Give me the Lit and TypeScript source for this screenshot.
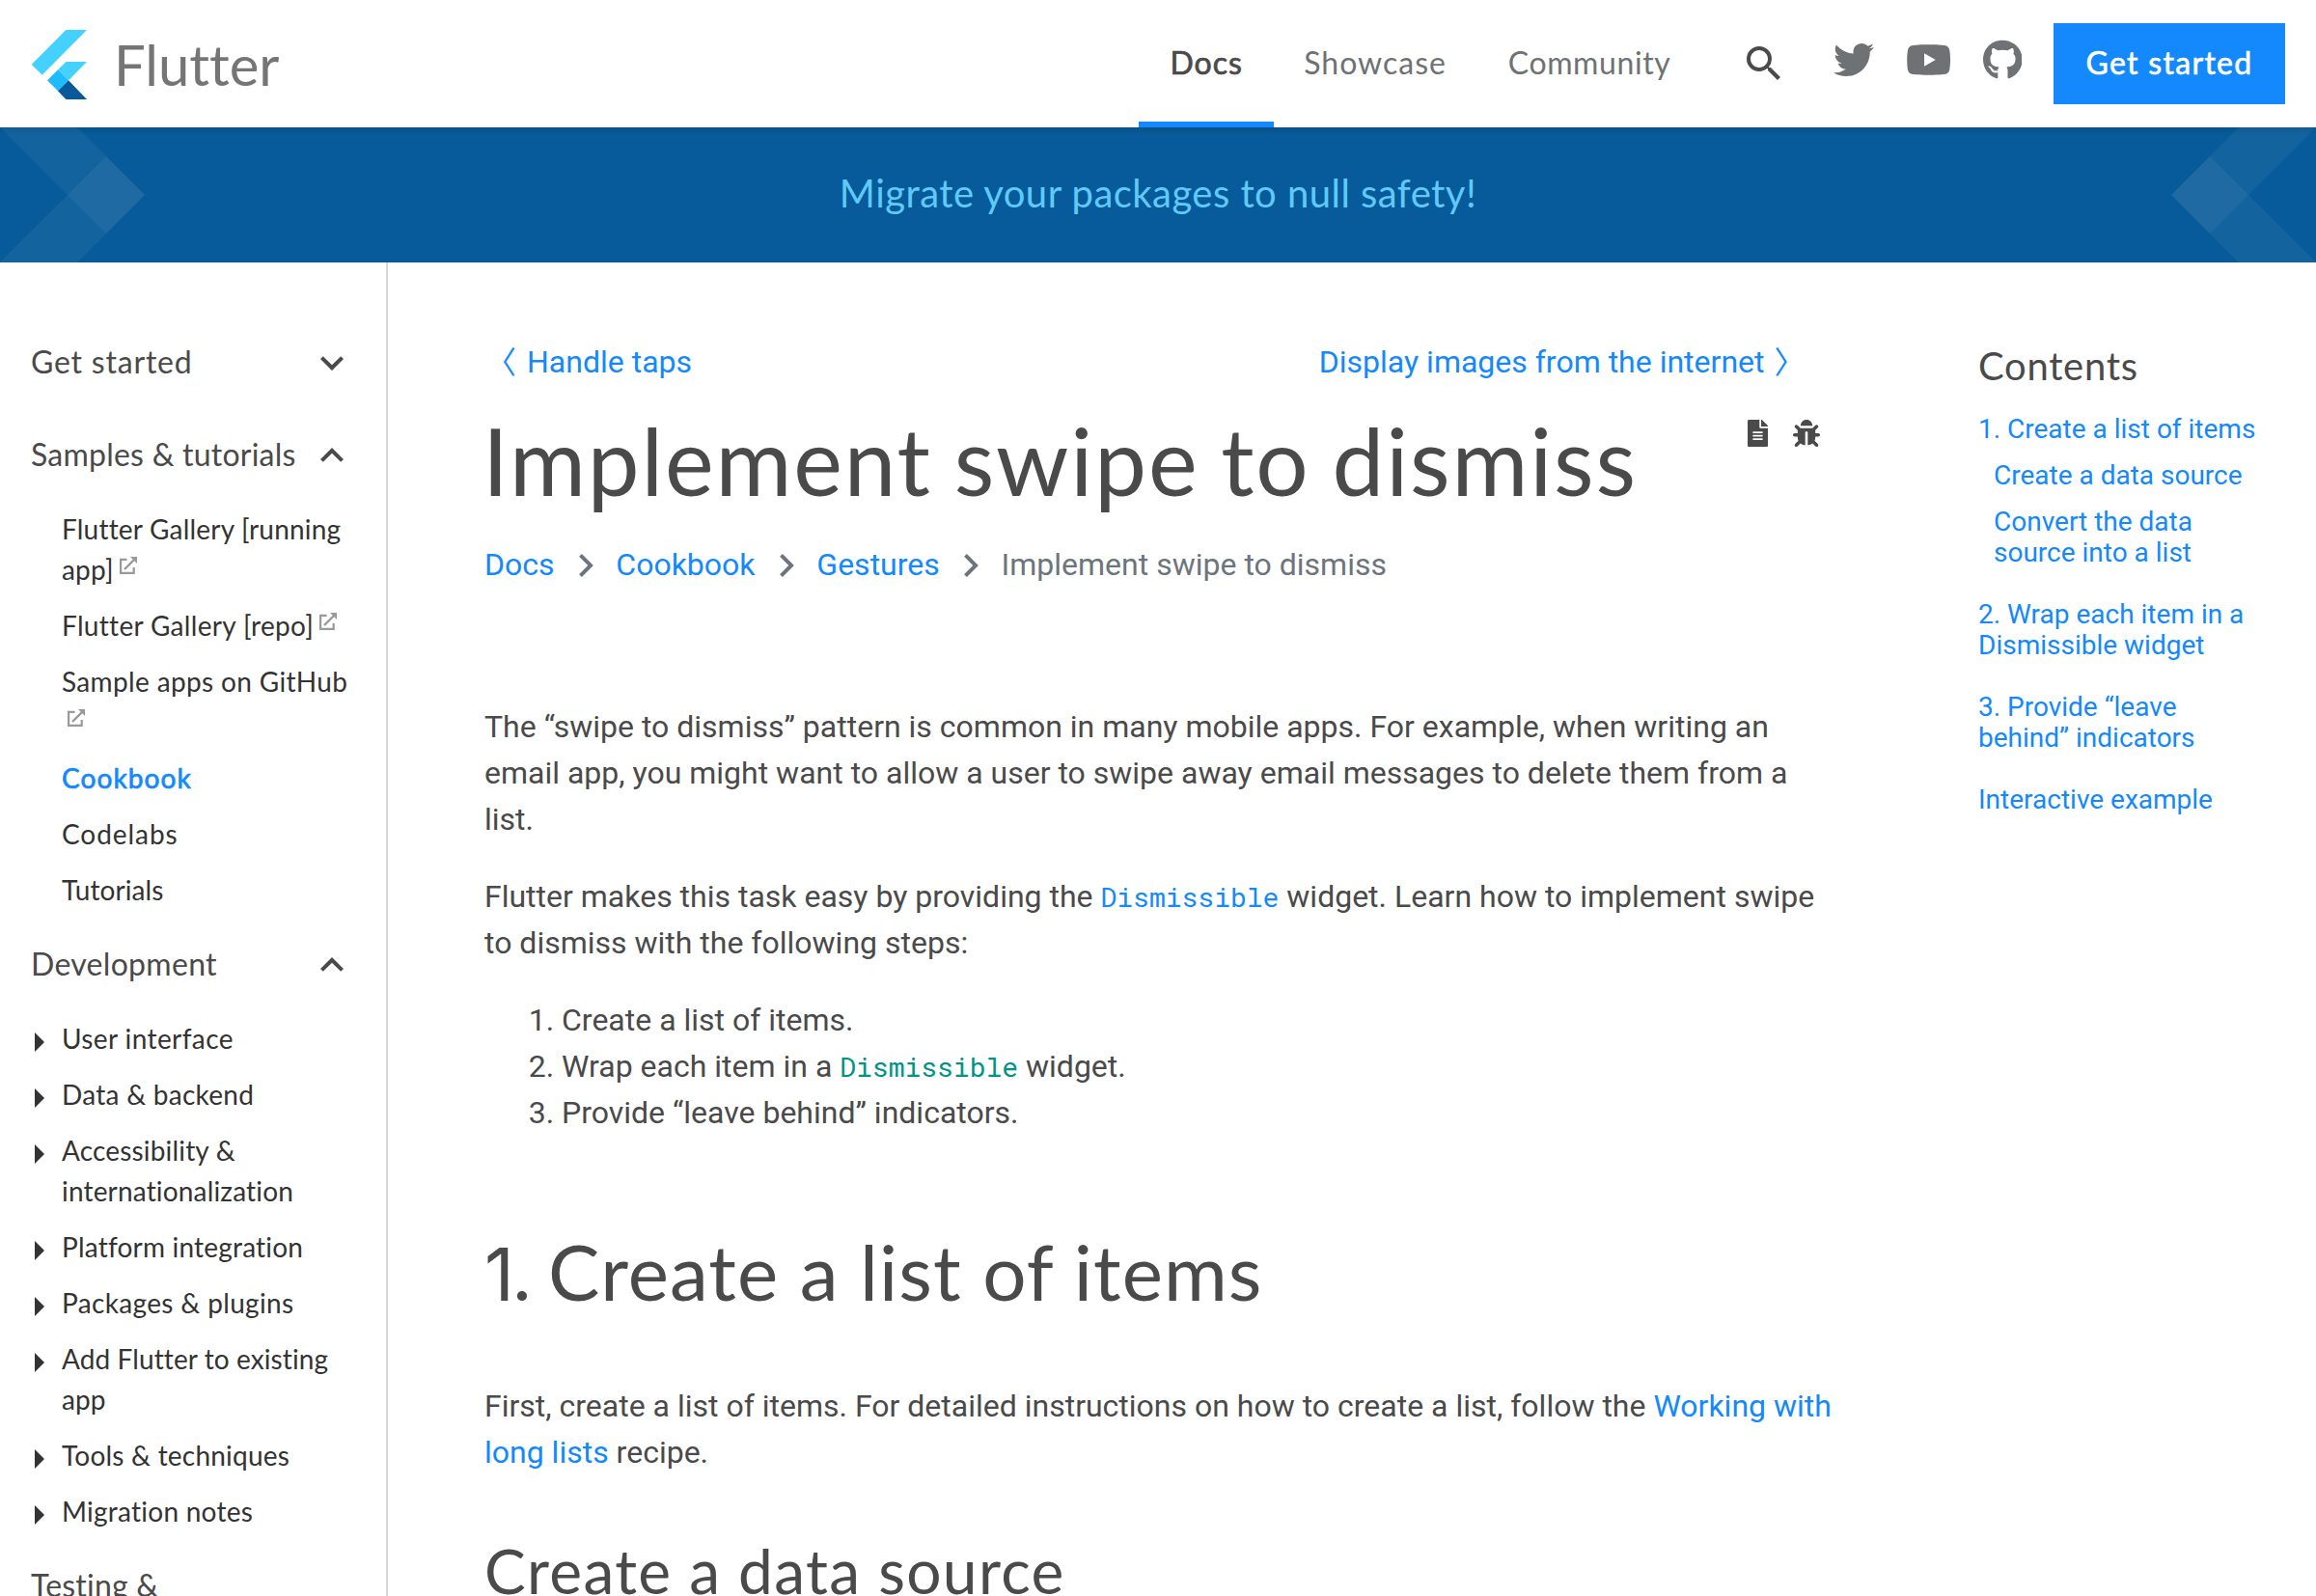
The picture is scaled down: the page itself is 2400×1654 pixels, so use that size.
import { LitElement, html, css, svg, nothing } from "lit";
import { customElement, property } from "lit/decorators.js";
import { classMap } from "lit/directives/class-map.js";
import { styleMap } from "lit/directives/style-map.js";

interface NavItem {
  label: string;
  /** Letter spacing in px. */
  tracking?: number;
  external?: boolean;
  active?: boolean;
  expandable?: boolean;
}

interface NavSection {
  label: string;
  tracking?: number;
  open: boolean;
  items: NavItem[];
}

const SECTIONS: NavSection[] = [
  { label: "Get started", tracking: 0.8, open: false, items: [] },
  {
    label: "Samples & tutorials",
    tracking: 0.23,
    open: true,
    items: [
      { label: "Flutter Gallery [running app]", tracking: 0.2, external: true },
      { label: "Flutter Gallery [repo]", tracking: 0.32, external: true },
      { label: "Sample apps on GitHub", tracking: 0.35, external: true },
      { label: "Cookbook", tracking: 1.1, active: true },
      { label: "Codelabs", tracking: 0.95 },
      { label: "Tutorials", tracking: 0.1 },
    ],
  },
  {
    label: "Development",
    tracking: 0.3,
    open: true,
    items: [
      { label: "User interface", tracking: 0.4, expandable: true },
      { label: "Data & backend", tracking: 0.27, expandable: true },
      { label: "Accessibility & internationalization", tracking: 0.17, expandable: true },
      { label: "Platform integration", tracking: 0.2, expandable: true },
      { label: "Packages & plugins", tracking: 0.35, expandable: true },
      { label: "Add Flutter to existing app", tracking: 0.1, expandable: true },
      { label: "Tools & techniques", tracking: 0.22, expandable: true },
      { label: "Migration notes", tracking: 0.25, expandable: true },
    ],
  },
  { label: "Testing & debugging", tracking: 0.2, open: false, items: [] },
];

const TWITTER =
  "M459.37 151.716c.325 4.548.325 9.097.325 13.645 0 138.72-105.583 298.558-298.558 298.558-59.452 0-114.68-17.219-161.137-47.106 8.447.974 16.568 1.299 25.34 1.299 49.055 0 94.213-16.568 130.274-44.832-46.132-.975-84.792-31.188-98.112-72.772 6.498.974 12.995 1.624 19.818 1.624 9.421 0 18.843-1.3 27.614-3.573-48.081-9.747-84.143-51.98-84.143-102.985v-1.299c13.969 7.797 30.214 12.67 47.431 13.319-28.264-18.843-46.781-51.005-46.781-87.391 0-19.492 5.197-37.36 14.294-52.954 51.655 63.675 129.3 105.258 216.365 109.807-1.624-7.797-2.599-15.918-2.599-24.04 0-57.828 46.782-104.934 104.934-104.934 30.213 0 57.502 12.67 76.67 33.137 23.715-4.548 46.456-13.32 66.599-25.34-7.798 24.366-24.366 44.833-46.132 57.827 21.117-2.273 41.584-8.122 60.426-16.243-14.292 20.791-32.161 39.308-52.628 54.253z";
const YOUTUBE =
  "M549.655 124.083c-6.281-23.65-24.787-42.276-48.284-48.597C458.781 64 288 64 288 64S117.22 64 74.629 75.486c-23.497 6.322-42.003 24.947-48.284 48.597-11.412 42.867-11.412 132.305-11.412 132.305s0 89.438 11.412 132.305c6.281 23.65 24.787 41.5 48.284 47.821C117.22 448 288 448 288 448s170.78 0 213.371-11.486c23.497-6.321 42.003-24.171 48.284-47.821 11.412-42.867 11.412-132.305 11.412-132.305s0-89.438-11.412-132.305zm-317.51 213.508V175.185l142.739 81.205-142.739 81.201z";
const GITHUB =
  "M165.9 397.4c0 2-2.3 3.6-5.2 3.6-3.3.3-5.6-1.3-5.6-3.6 0-2 2.3-3.6 5.2-3.6 3-.3 5.6 1.3 5.6 3.6zm-31.1-4.5c-.7 2 1.3 4.3 4.3 4.9 2.6 1 5.6 0 6.2-2s-1.3-4.3-4.3-5.2c-2.6-.7-5.5.3-6.2 2.3zm44.2-1.7c-2.9.7-4.9 2.6-4.6 4.9.3 2 2.9 3.3 5.9 2.6 2.9-.7 4.9-2.6 4.6-4.6-.3-1.9-3-3.2-5.9-2.9zM244.8 8C106.1 8 0 113.3 0 252c0 110.9 69.8 205.8 169.5 239.2 12.8 2.3 17.3-5.6 17.3-12.1 0-6.2-.3-40.4-.3-61.4 0 0-70 15-84.7-29.8 0 0-11.4-29.1-27.8-36.6 0 0-22.9-15.7 1.6-15.4 0 0 24.9 2 38.6 25.8 21.9 38.6 58.6 27.5 72.9 20.9 2.3-16 8.8-27.1 16-33.7-55.9-6.2-112.3-14.3-112.3-110.5 0-27.5 7.6-41.3 23.6-58.9-2.6-6.5-11.1-33.3 2.6-67.9 20.9-6.5 69 27 69 27 20-5.6 41.5-8.5 62.8-8.5s42.8 2.9 62.8 8.5c0 0 48.1-33.6 69-27 13.7 34.7 5.2 61.4 2.6 67.9 16 17.7 25.8 31.5 25.8 58.9 0 96.5-58.9 104.2-114.8 110.5 9.2 7.9 17 22.9 17 46.4 0 33.7-.3 75.4-.3 83.6 0 6.5 4.6 14.4 17.3 12.1C428.2 457.8 496 362.9 496 252 496 113.3 383.5 8 244.8 8z";
const SEARCH =
  "M15.5 14h-.79l-.28-.27A6.471 6.471 0 0 0 16 9.5 6.5 6.5 0 1 0 9.5 16c1.61 0 3.09-.59 4.23-1.57l.27.28v.79l5 4.99L20.49 19l-4.99-5zm-6 0C7.01 14 5 11.99 5 9.5S7.01 5 9.5 5 14 7.01 14 9.5 11.99 14 9.5 14z";
const FILE =
  "M224 136V0H24C10.7 0 0 10.7 0 24v464c0 13.3 10.7 24 24 24h336c13.3 0 24-10.7 24-24V160H248c-13.2 0-24-10.8-24-24zm64 236c0 6.6-5.4 12-12 12H108c-6.6 0-12-5.4-12-12v-8c0-6.6 5.4-12 12-12h168c6.6 0 12 5.4 12 12v8zm0-64c0 6.6-5.4 12-12 12H108c-6.6 0-12-5.4-12-12v-8c0-6.6 5.4-12 12-12h168c6.6 0 12 5.4 12 12v8zm0-72v8c0 6.6-5.4 12-12 12H108c-6.6 0-12-5.4-12-12v-8c0-6.6 5.4-12 12-12h168c6.6 0 12 5.4 12 12zm96-114.1v6.1H256V0h6.1c6.4 0 12.5 2.5 17 7l97.9 98c4.5 4.5 7 10.6 7 16.9z";
const BUG =
  "M511.988 288.9c-.478 17.43-15.217 31.1-32.653 31.1H424v16c0 21.864-4.882 42.584-13.6 61.145l60.228 60.228c12.496 12.497 12.496 32.758 0 45.255-12.498 12.497-32.759 12.496-45.256 0l-54.736-54.736C345.886 467.965 314.351 480 280 480V236c0-6.627-5.373-12-12-12h-24c-6.627 0-12 5.373-12 12v244c-34.351 0-65.886-12.035-90.636-32.108l-54.736 54.736c-12.498 12.497-32.759 12.496-45.256 0-12.496-12.497-12.496-32.758 0-45.255l60.228-60.228C92.882 378.584 88 357.864 88 336v-16H32.666C15.23 320 .491 306.33.013 288.9-.484 270.816 14.028 256 32 256h56v-58.745l-46.628-46.628c-12.496-12.497-12.496-32.758 0-45.255 12.498-12.497 32.758-12.497 45.256 0L141.255 160h229.489l54.627-54.627c12.498-12.497 32.758-12.497 45.256 0 12.496 12.497 12.496 32.758 0 45.255L424 197.255V256h56c17.972 0 32.484 14.816 31.988 32.9zM257 0c-61.856 0-112 50.144-112 112h224C369 50.144 318.856 0 257 0z";

const shared = css`
  :host,
  * {
    box-sizing: border-box;
  }
  a {
    color: inherit;
    text-decoration: none;
  }
  svg {
    display: block;
    flex: none;
  }
`;

@customElement("site-header")
export class SiteHeader extends LitElement {
  static styles = [
    shared,
    css`
      :host {
        display: flex;
        align-items: center;
        height: 132px;
        padding: 0 32px;
        background: #fff;
        font-family: Lato, sans-serif;
        font-size: 32px;
        line-height: 48px;
        font-variant-ligatures: none;
        color: #6e7274;
      }
      .brand {
        display: flex;
        align-items: center;
        gap: 26px;
        margin-right: auto;
      }
      .word {
        font-size: 58px;
        color: #757575;
        line-height: 70px;
        padding-top: 2px;
      }
      .logo {
        margin-top: 2px;
      }
      nav {
        display: flex;
        align-self: stretch;
      }
      .link {
        display: flex;
        align-items: center;
        justify-content: center;
        padding-bottom: 3px;
      }
      .docs {
        width: 140px;
        padding-bottom: 0;
        padding-top: 3px;
        border-bottom: 6px solid #1389fd;
        color: #4a4a4a;
        letter-spacing: 1px;
        -webkit-text-stroke: 0.7px currentColor;
      }
      .showcase {
        width: 210px;
        letter-spacing: 1px;
      }
      .community {
        width: 234px;
        letter-spacing: 0.6px;
      }
      .search {
        margin: 0 48.4px 0 40px;
        fill: #4a4a4a;
      }
      .social {
        display: flex;
        gap: 32.5px;
        padding-bottom: 8px;
        fill: #6e7274;
      }
      .cta {
        width: 240px;
        height: 84px;
        margin-left: 32.6px;
        padding-bottom: 3px;
        display: flex;
        align-items: center;
        justify-content: center;
        background: #1389fd;
        color: #fff;
        letter-spacing: 1.3px;
        -webkit-text-stroke: 0.6px currentColor;
      }
    `,
  ];

  private icon(path: string, width: number) {
    return html`<svg width=${(width * 42) / 512} height="42" viewBox="0 0 ${width} 512">
      ${svg`<path d=${path}></path>`}
    </svg>`;
  }

  render() {
    return html`
      <a class="brand" href="#">
        <svg class="logo" width="60" height="72" viewBox="0 0 180 216">
          <path d="M109 0h65L35 140 2 107z" fill="#45d1fd" />
          <path d="M109 99h65l-57 58-33-33z" fill="#45d1fd" />
          <path d="M84 124l33 33-33 33-33-33z" fill="#1fbcfd" />
          <path d="M84 190l33-33 57 59h-65z" fill="#08589c" />
        </svg>
        <span class="word">Flutter</span>
      </a>
      <nav>
        <a class="link docs" href="#">Docs</a>
        <a class="link showcase" href="#">Showcase</a>
        <a class="link community" href="#">Community</a>
      </nav>
      <svg class="search" width="48" height="48" viewBox="0 0 24 24"><path d=${SEARCH} /></svg>
      <div class="social">${this.icon(TWITTER, 512)}${this.icon(YOUTUBE, 576)}${this.icon(GITHUB, 496)}</div>
      <a class="cta" href="#">Get started</a>
    `;
  }
}

@customElement("site-banner")
export class SiteBanner extends LitElement {
  static styles = [
    shared,
    css`
      :host {
        display: flex;
        justify-content: space-between;
        align-items: center;
        height: 140px;
        background: linear-gradient(rgba(0, 0, 0, 0.1), rgba(0, 0, 0, 0) 8px), #075b9a;
        font-family: Lato, sans-serif;
        font-size: 40px;
        line-height: 60px;
        letter-spacing: 0.46px;
        font-variant-ligatures: none;
        color: #5fcaf8;
      }
      .text {
        padding-bottom: 5px;
      }
      .decor {
        fill: rgba(255, 255, 255, 0.05);
      }
      .flip {
        transform: scaleX(-1);
      }
    `,
  ];

  private decor(flip: boolean) {
    return html`<svg class=${classMap({ decor: true, flip })} width="150" height="140" viewBox="0 0 150 140">
      <path d="M0 0h80l70 70-40 40z" />
      <path d="M0 140h80l70-70-40-40z" />
    </svg>`;
  }

  render() {
    return html`${this.decor(false)}<a class="text" href="#">Migrate your packages to null safety!</a>${this.decor(true)}`;
  }
}

@customElement("side-nav")
export class SideNav extends LitElement {
  static styles = [
    shared,
    css`
      :host {
        display: block;
        width: 402px;
        flex: none;
        padding: 55px 32px 0;
        border-right: 2px solid #d8d8d8;
        font-family: Lato, sans-serif;
        font-variant-ligatures: none;
      }
      .section {
        display: flex;
        justify-content: space-between;
        align-items: center;
        padding: 24px 0;
        font-size: 32px;
        line-height: 48px;
        color: #4a4a4a;
      }
      .chevron {
        margin: 1px 0 -1px;
        fill: #4a4a4a;
      }
      .item {
        display: grid;
        grid-template-columns: 32px 1fr;
        padding: 8px 0;
        font-size: 28px;
        line-height: 42px;
        color: #333;
      }
      .active {
        color: #1389fd;
        -webkit-text-stroke: 0.7px currentColor;
      }
      .arrow {
        margin: 15px 0 0 4px;
        fill: #333;
      }
      .label {
        grid-column: 2;
      }
      .ext {
        display: inline-block;
        margin-left: 6px;
        vertical-align: 6.5px;
        line-height: 0;
      }
    `,
  ];

  @property({ attribute: false }) sections: NavSection[] = [];

  private item(i: NavItem) {
    return html`<a class=${classMap({ item: true, active: !!i.active })} href="#">
      ${i.expandable
        ? html`<svg class="arrow" width="10" height="20" viewBox="0 0 10 20"><path d="M0 0l10 10L0 20z" /></svg>`
        : nothing}
      <span class="label" style=${styleMap({ letterSpacing: `${i.tracking ?? 0}px` })}
        >${i.label}${i.external
          ? html`<span class="ext"
              ><svg width="18" height="18" viewBox="0 0 18 18">
                <path d="M7.5 2.8H1.1v14.1h13.6V11" fill="none" stroke="#999" stroke-width="2.2" />
                <path d="M5 13L15.5 2.5" stroke="#999" stroke-width="2.4" />
                <path d="M11 0h7v7z" fill="#999" /></svg></span>`
          : nothing}</span>
    </a>`;
  }

  render() {
    return this.sections.map(
      (s) => html`<div class="section">
          <span style=${styleMap({ letterSpacing: `${s.tracking ?? 0}px` })}>${s.label}</span>
          <svg class="chevron" width="48" height="48" viewBox="0 0 24 24">
            <path
              d=${s.open
                ? "M7.41 15.41L12 10.83l4.59 4.58L18 14l-6-6-6 6z"
                : "M7.41 8.59L12 13.17l4.59-4.58L18 10l-6 6-6-6z"}
            />
          </svg>
        </div>
        ${s.items.map((i) => this.item(i))}`,
    );
  }
}

@customElement("doc-article")
export class DocArticle extends LitElement {
  static styles = [
    shared,
    css`
      :host {
        display: block;
        width: 1596px;
        flex: none;
        padding: 79px 98px 0 100px;
        font-family: Roboto, sans-serif;
        font-size: 32px;
        line-height: 48px;
        color: #4a4a4a;
      }
      a {
        color: #1389fd;
      }
      .pager {
        display: flex;
        justify-content: space-between;
        height: 48px;
        padding: 0 29.5px 0 1px;
      }
      .pager a {
        display: flex;
        gap: 11px;
      }
      .pager .next {
        gap: 10px;
      }
      .angle {
        font-family: "Noto Sans CJK JP", sans-serif;
        margin-top: -2px;
      }
      h1,
      h2,
      h3 {
        margin: 0;
        font-family: Lato, sans-serif;
        font-weight: 400;
        line-height: 1.2;
        font-variant-ligatures: none;
      }
      .title {
        display: flex;
        justify-content: space-between;
        align-items: flex-start;
        margin-top: 19.5px;
      }
      h1 {
        margin-left: -2px;
        font-size: 96px;
        letter-spacing: 1.84px;
        word-spacing: -3.5px;
      }
      .tools {
        display: flex;
        gap: 26.5px;
        margin: 16.5px 14px 0 0;
        fill: #4a4a4a;
      }
      .crumbs {
        display: flex;
        align-items: center;
        margin-top: 27.5px;
        color: #6c757d;
      }
      .crumbs svg {
        margin: 2px 23.5px 0 25.3px;
        fill: #6c757d;
      }
      .body {
        padding-top: 120px;
      }
      p,
      ol {
        margin: 0 0 32px;
      }
      ol {
        padding-left: 80px;
      }
      h2 {
        margin: 92px 0 0;
        font-size: 80px;
        letter-spacing: 1.05px;
      }
      .num {
        display: inline-block;
        width: 66px;
        font-family: Inter, sans-serif;
        font-size: 76px;
        line-height: 1;
        letter-spacing: -3px;
        white-space: nowrap;
      }
      h2 + p {
        margin: 68px 0 60.5px;
      }
      h3 {
        font-size: 64px;
        letter-spacing: 1.35px;
        white-space: nowrap;
      }
      code {
        font-family: "Roboto Mono", "Liberation Mono", monospace;
        font-size: 28px;
        line-height: 0;
        color: #009485;
      }
      a code {
        color: inherit;
      }
    `,
  ];

  render() {
    const sep = html`<svg width="15" height="24" viewBox="8.59 6 7.41 12"><path d="M10 6L8.59 7.41 13.17 12l-4.58 4.59L10 18l6-6z" /></svg>`;
    return html`
      <div class="pager">
        <a href="#"><span class="angle">〈</span><span>Handle taps</span></a>
        <a class="next" href="#"><span>Display images from the internet</span><span class="angle">〉</span></a>
      </div>
      <div class="title">
        <h1>Implement swipe to dismiss</h1>
        <div class="tools">
          <svg width="21" height="28" viewBox="0 0 384 512"><path d=${FILE} /></svg>
          <svg width="28" height="28" viewBox="0 0 512 512"><path d=${BUG} /></svg>
        </div>
      </div>
      <div class="crumbs">
        <a href="#">Docs</a>${sep}<a href="#">Cookbook</a>${sep}<a href="#">Gestures</a>${sep}<span>Implement swipe to dismiss</span>
      </div>
      <div class="body">
        <p>The “swipe to dismiss” pattern is common in many mobile apps. For example, when writing an email app, you might want to allow a user to swipe away email messages to delete them from a list.</p>
        <p>Flutter makes this task easy by providing the <a href="#"><code>Dismissible</code></a> widget. Learn how to implement swipe to dismiss with the following steps:</p>
        <ol>
          <li>Create a list of items.</li>
          <li>Wrap each item in a <code>Dismissible</code> widget.</li>
          <li>Provide “leave behind” indicators.</li>
        </ol>
        <h2><span class="num">1. </span>Create a list of items</h2>
        <p>First, create a list of items. For detailed instructions on how to create a list, follow the <a href="#">Working with long lists</a> recipe.</p>
        <h3>Create a data source</h3>
      </div>
    `;
  }
}

@customElement("page-toc")
export class PageToc extends LitElement {
  static styles = [
    shared,
    css`
      :host {
        display: block;
        flex: 1;
        padding: 83px 54px 0 52px;
        font-family: Roboto, sans-serif;
        font-size: 28px;
        line-height: 32px;
        color: #1389fd;
      }
      .heading {
        font-family: Lato, sans-serif;
        font-size: 40px;
        line-height: 48px;
        letter-spacing: 0.7px;
        color: #4a4a4a;
        margin-bottom: 25.5px;
      }
      .list {
        display: flex;
        flex-direction: column;
        gap: 32px;
      }
      .group {
        display: flex;
        flex-direction: column;
        gap: 16px;
      }
      .sub {
        padding-left: 16px;
      }
    `,
  ];

  render() {
    return html`
      <div class="heading">Contents</div>
      <div class="list">
        <div class="group">
          <a href="#">1. Create a list of items</a>
          <a class="sub" href="#">Create a data source</a>
          <a class="sub" href="#">Convert the data source into a list</a>
        </div>
        <a href="#">2. Wrap each item in a Dismissible widget</a>
        <a href="#">3. Provide “leave behind” indicators</a>
        <a href="#">Interactive example</a>
      </div>
    `;
  }
}

@customElement("app-root")
export class AppRoot extends LitElement {
  static styles = css`
    :host {
      display: flex;
      flex-direction: column;
      width: 2400px;
      height: 1654px;
      overflow: hidden;
      background: #fff;
    }
    .columns {
      display: flex;
      flex: 1;
      min-height: 0;
    }
  `;

  render() {
    return html`
      <site-header></site-header>
      <site-banner></site-banner>
      <div class="columns">
        <side-nav .sections=${SECTIONS}></side-nav>
        <doc-article></doc-article>
        <page-toc></page-toc>
      </div>
    `;
  }
}
